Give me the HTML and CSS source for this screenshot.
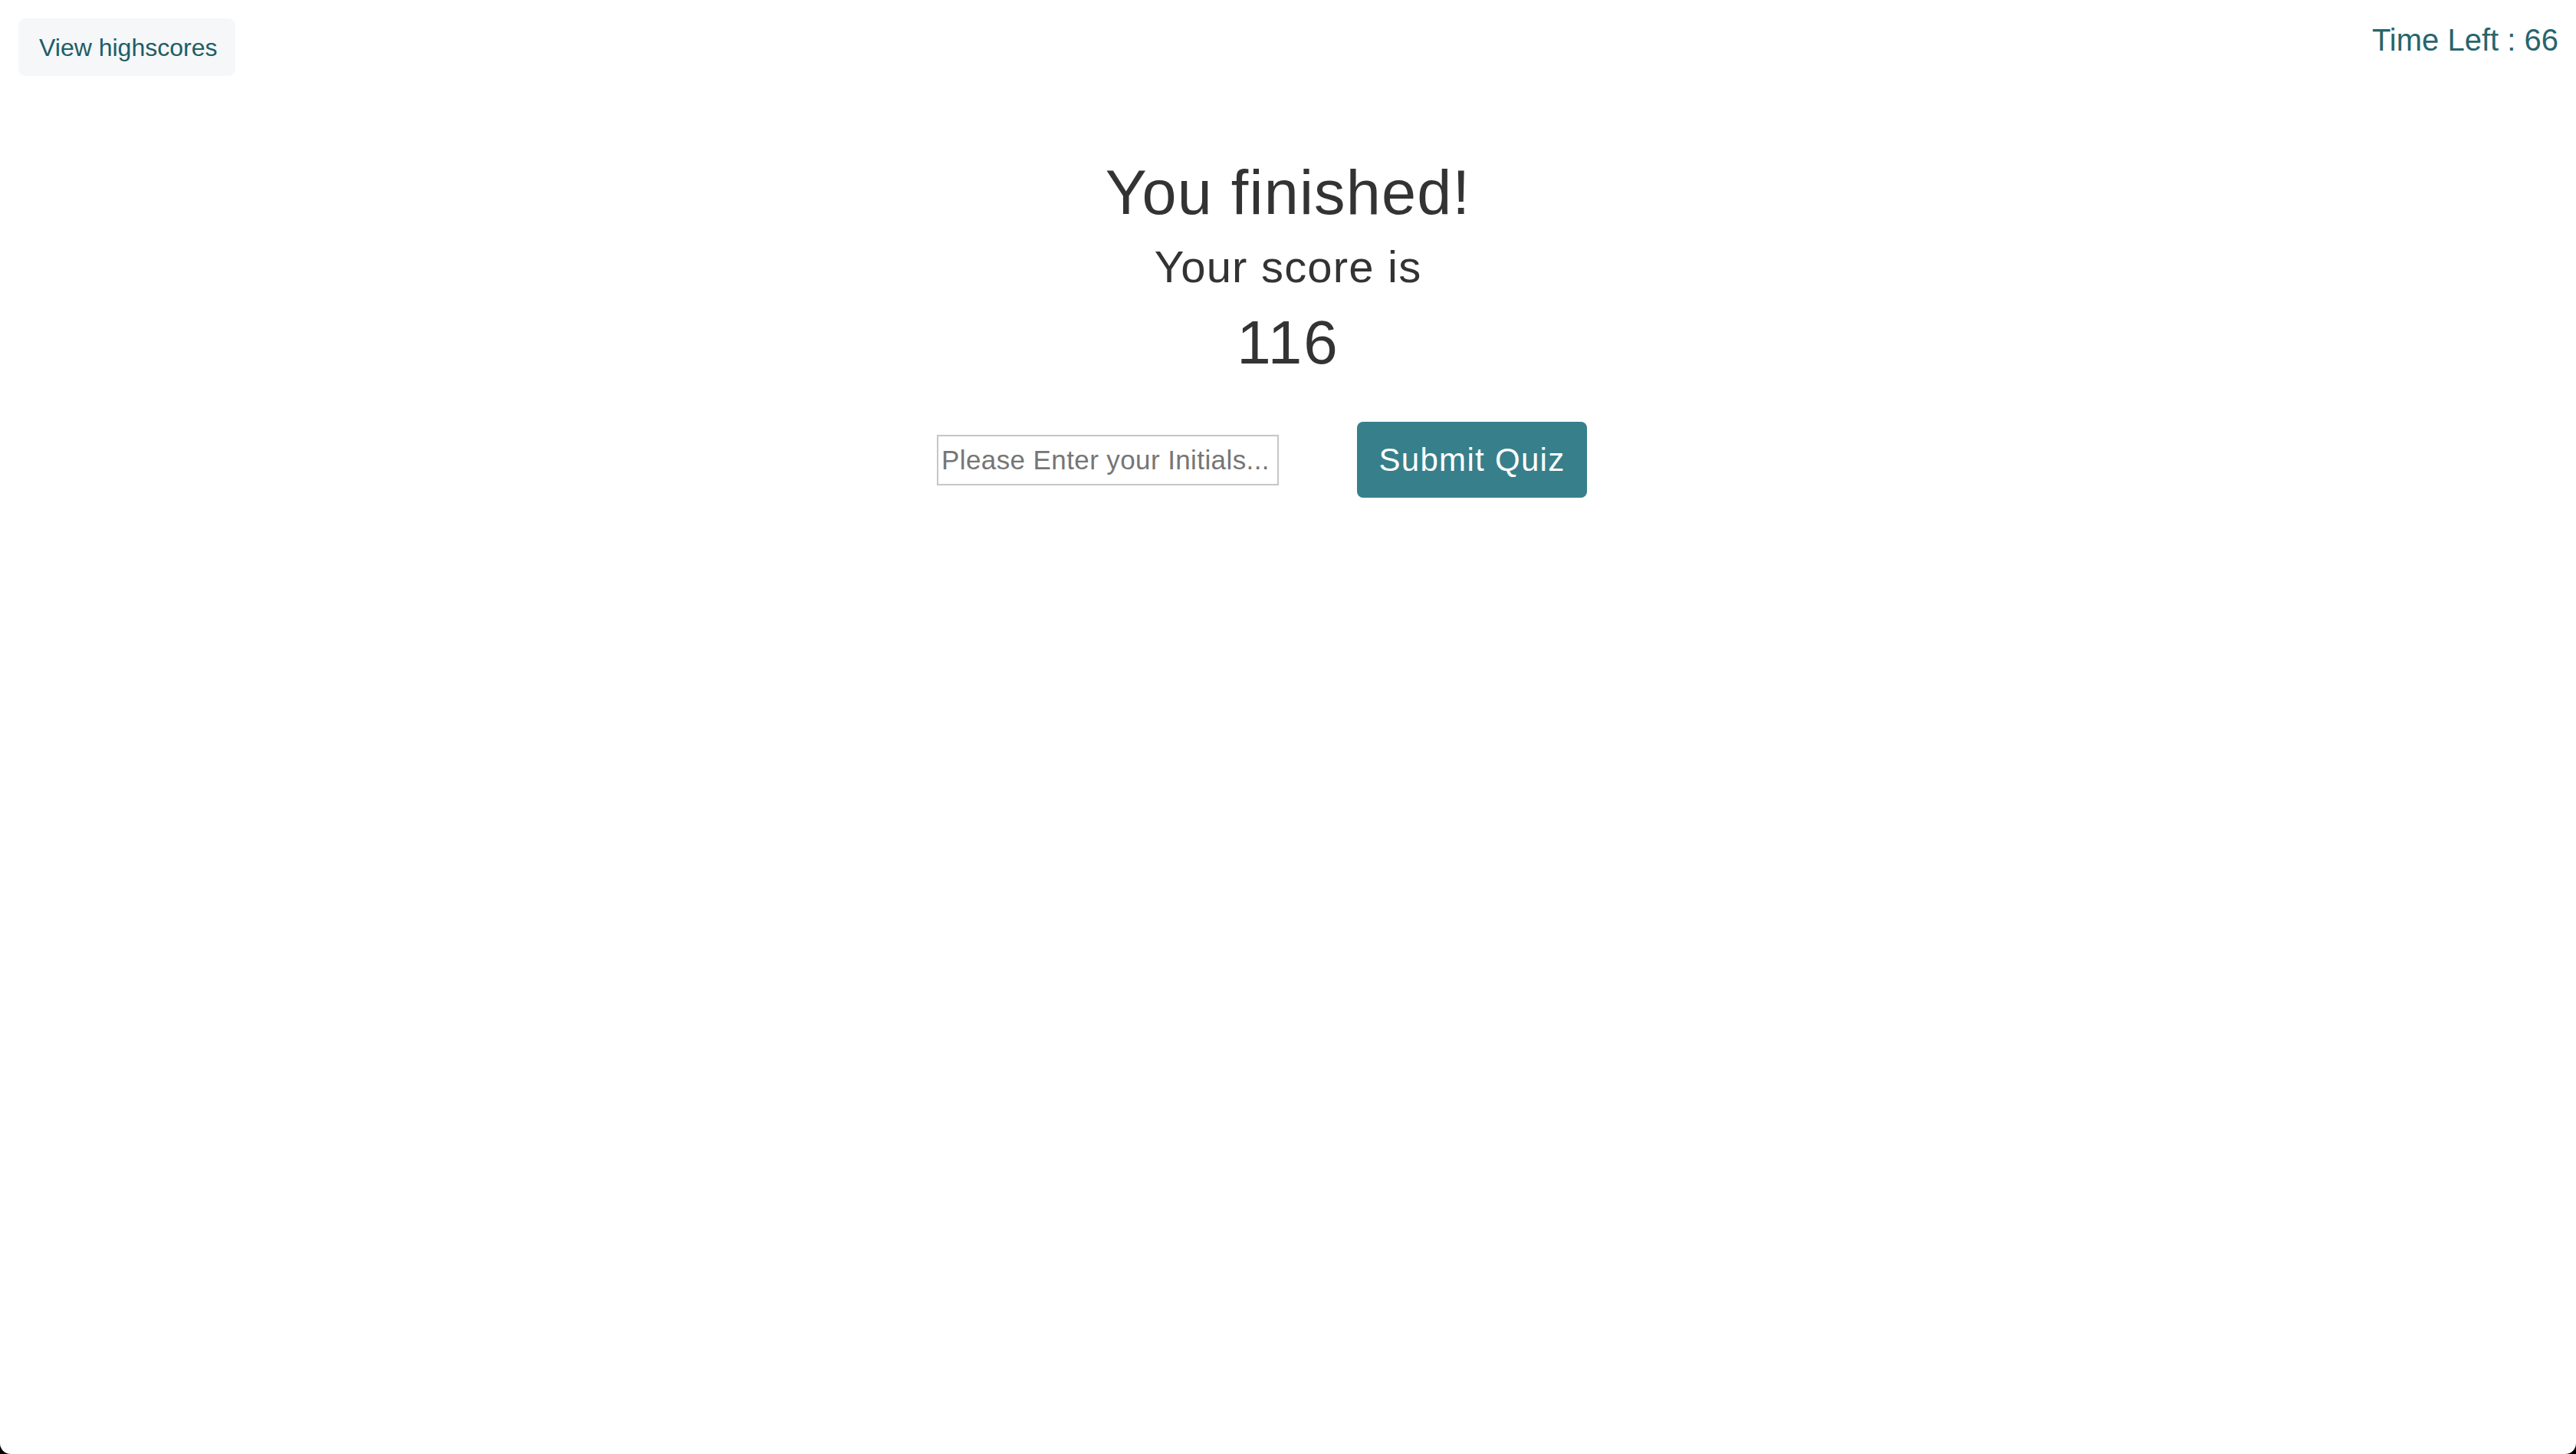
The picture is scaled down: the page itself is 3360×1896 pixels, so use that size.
FILE: index.html
```html
<!DOCTYPE html>
<html lang="en">
<head>
<meta charset="utf-8">
<title>Quiz</title>
<link rel="stylesheet" href="styles.css">
</head>
<body>
<header class="topbar">
  <button class="highscores-btn" type="button">View highscores</button>
  <div class="timer">Time Left : 66</div>
</header>
<main class="result">
  <h1 class="result-title">You finished!</h1>
  <p class="result-label">Your score is</p>
  <p class="result-score">116</p>
  <form class="initials-form">
    <input class="initials-input" type="text" placeholder="Please Enter your Initials...">
    <button class="submit-btn" type="button">Submit Quiz</button>
  </form>
</main>
</body>
</html>
```

FILE: styles.css
```css
html {
  background: #000;
}

body {
  margin: 0;
  height: 1896px;
  background: #fff;
  border-radius: 0 0 14px 14px;
  font-family: "Liberation Sans", Arial, Helvetica, sans-serif;
  color: #333;
  overflow: hidden;
}

.topbar {
  display: flex;
  justify-content: space-between;
  align-items: flex-start;
  padding: 24px 23px 0 24px;
}

.highscores-btn {
  width: 283px;
  height: 75px;
  padding: 0 0 0 27px;
  text-align: left;
  border: none;
  border-radius: 9px;
  background: #f5f7f8;
  color: #205d66;
  font-family: inherit;
  font-size: 32px;
  line-height: 1;
}

.timer {
  margin-top: 6px;
  font-size: 40px;
  line-height: 1.117;
  color: #27656d;
}

.result {
  display: flex;
  flex-direction: column;
  align-items: center;
  margin-top: 112px;
}

.result-title {
  margin: 0;
  font-size: 81px;
  font-weight: normal;
  line-height: 1;
  letter-spacing: 1.2px;
}

.result-label {
  margin: 27px 0 0;
  font-size: 58px;
  line-height: 1;
  letter-spacing: 1.2px;
}

.result-score {
  margin: 30px 0 0;
  font-size: 80px;
  line-height: 1;
  letter-spacing: 2px;
}

.initials-form {
  display: flex;
  align-items: center;
  gap: 102px;
  margin-top: 63px;
  padding-right: 68px;
}

.initials-input {
  box-sizing: border-box;
  width: 446px;
  height: 66px;
  padding: 0 4px;
  border: 2px solid #c6c6c6;
  border-radius: 0;
  font-family: inherit;
  font-size: 35px;
  letter-spacing: 0.4px;
  color: #333;
  outline: none;
}

.initials-input::placeholder {
  color: #767676;
}

.submit-btn {
  width: 300px;
  height: 99px;
  padding: 0;
  border: none;
  border-radius: 8px;
  background: #37808b;
  color: #fff;
  font-family: inherit;
  font-size: 42px;
  letter-spacing: 1.3px;
}
```
